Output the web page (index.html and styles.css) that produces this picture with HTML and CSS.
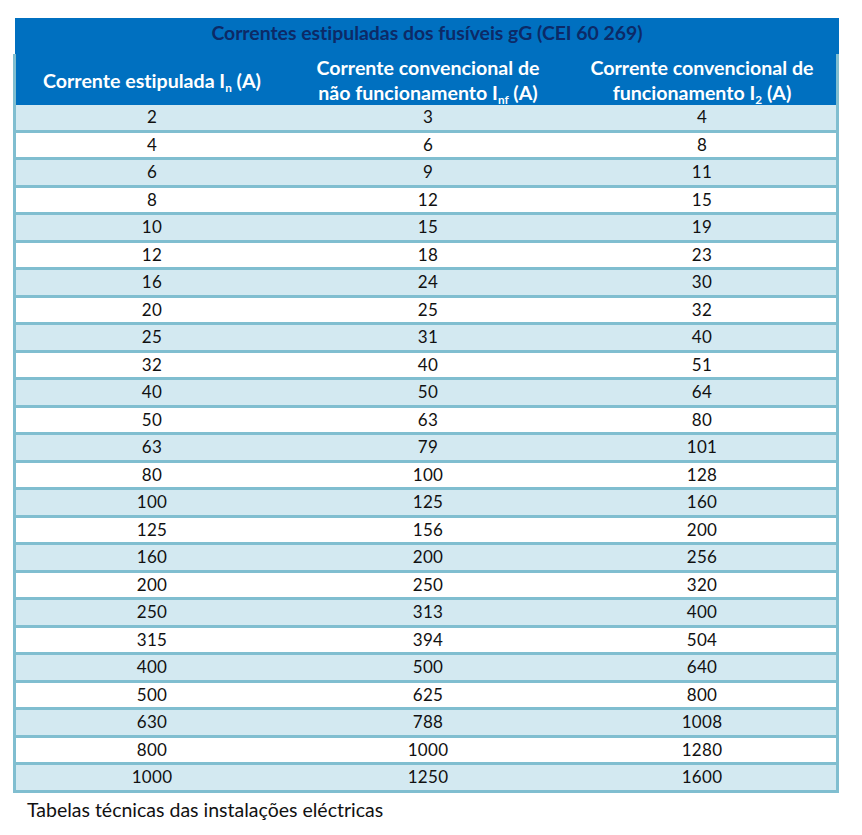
FILE: index.html
```html
<!DOCTYPE html>
<html lang="pt">
<head>
<meta charset="utf-8">
<title>Correntes estipuladas dos fusíveis gG</title>
<link rel="stylesheet" href="styles.css">
</head>
<body>
<div class="page">
  <div class="title">Correntes estipuladas dos fusíveis gG (CEI 60 269)</div>
  <table class="fuses">
    <colgroup>
      <col class="c1"><col class="c2"><col class="c3">
    </colgroup>
    <thead>
      <tr>
        <th>Corrente estipulada I<sub>n</sub> (A)</th>
        <th>Corrente convencional de<br>não funcionamento I<sub>nf</sub> (A)</th>
        <th>Corrente convencional de<br>funcionamento I<sub>2</sub> (A)</th>
      </tr>
    </thead>
    <tbody>
      <tr><td>2</td><td>3</td><td>4</td></tr>
      <tr><td>4</td><td>6</td><td>8</td></tr>
      <tr><td>6</td><td>9</td><td>11</td></tr>
      <tr><td>8</td><td>12</td><td>15</td></tr>
      <tr><td>10</td><td>15</td><td>19</td></tr>
      <tr><td>12</td><td>18</td><td>23</td></tr>
      <tr><td>16</td><td>24</td><td>30</td></tr>
      <tr><td>20</td><td>25</td><td>32</td></tr>
      <tr><td>25</td><td>31</td><td>40</td></tr>
      <tr><td>32</td><td>40</td><td>51</td></tr>
      <tr><td>40</td><td>50</td><td>64</td></tr>
      <tr><td>50</td><td>63</td><td>80</td></tr>
      <tr><td>63</td><td>79</td><td>101</td></tr>
      <tr><td>80</td><td>100</td><td>128</td></tr>
      <tr><td>100</td><td>125</td><td>160</td></tr>
      <tr><td>125</td><td>156</td><td>200</td></tr>
      <tr><td>160</td><td>200</td><td>256</td></tr>
      <tr><td>200</td><td>250</td><td>320</td></tr>
      <tr><td>250</td><td>313</td><td>400</td></tr>
      <tr><td>315</td><td>394</td><td>504</td></tr>
      <tr><td>400</td><td>500</td><td>640</td></tr>
      <tr><td>500</td><td>625</td><td>800</td></tr>
      <tr><td>630</td><td>788</td><td>1008</td></tr>
      <tr><td>800</td><td>1000</td><td>1280</td></tr>
      <tr><td>1000</td><td>1250</td><td>1600</td></tr>
    </tbody>
  </table>
  <p class="caption">Tabelas técnicas das instalações eléctricas</p>
</div>
</body>
</html>
```
FILE: styles.css
```css
html, body {
  margin: 0;
  padding: 0;
  background: #ffffff;
}

.page {
  padding: 18px 0 0 13px;
  font-family: Lato, "Open Sans", sans-serif;
  font-variant-ligatures: none;
}

.title {
  margin-left: 2px;
  width: 824px;
  height: 36px;
  box-sizing: border-box;
  padding-top: 3px;
  background: #0070c0;
  color: #0c2a67;
  font-weight: 700;
  font-size: 19.4px;
  line-height: 23px;
  text-align: center;
}

.fuses {
  width: 826px;
  border-collapse: separate;
  border-spacing: 0;
  border-left: 3px solid #80bed0;
  border-right: 3px solid #80bed0;
  table-layout: fixed;
}

.c1 { width: 272px; }
.c2 { width: 280px; }
.c3 { width: 268px; }

.fuses th {
  height: 51px;
  padding: 1px 0 0;
  box-sizing: border-box;
  background: #0070c0;
  color: #ffffff;
  font-weight: 700;
  font-size: 19.6px;
  line-height: 25px;
  text-align: center;
  vertical-align: middle;
}

.fuses sub {
  font-size: 0.6em;
  vertical-align: -0.3em;
  line-height: 0;
}

.fuses td {
  height: 27.5px;
  padding: 0;
  box-sizing: border-box;
  border-bottom: 3px solid #80bed0;
  color: #111111;
  font-size: 17px;
  letter-spacing: 0.3px;
  line-height: 22px;
  text-align: center;
  vertical-align: middle;
}

.fuses tbody tr:nth-child(odd) td {
  background: #d3e9f1;
}

.fuses tbody tr:nth-child(even) td {
  background: #ffffff;
}

.caption {
  margin: 5px 0 0 14px;
  color: #111111;
  font-size: 19.5px;
  line-height: 24px;
}
```
